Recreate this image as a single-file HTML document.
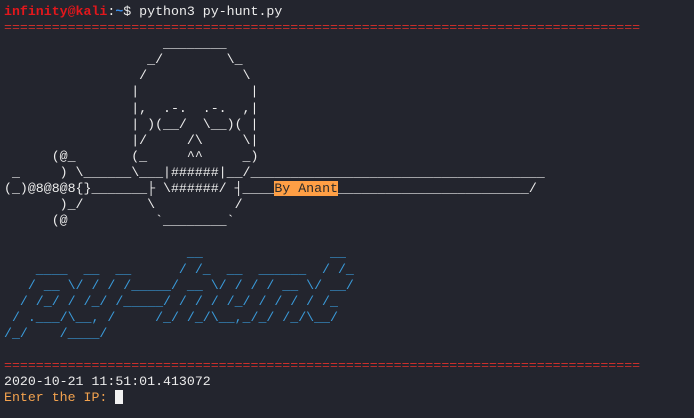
<!DOCTYPE html>
<html><head><meta charset="utf-8"><style>
html,body{margin:0;padding:0;background:#23252e;width:694px;height:418px;overflow:hidden}
pre{margin:0;padding:4px 0 0 4px;font-family:"Liberation Mono","DejaVu Sans Mono",monospace;font-size:13.25px;line-height:16.1px;color:#ececec;white-space:pre}
.r{color:#e3171c;font-weight:bold}
.b{color:#3b8eea;font-weight:bold}
.eq{color:#c9302c}
.bl{color:#3a9ad9}
.o{color:#f3a24e}
.ba{background:#ff9f45;color:#2b2b2b}
.cur{display:inline-block;width:8px;height:14px;background:#f2f2f2;vertical-align:-3px}
</style></head><body><pre><span class="r">infinity@kali</span>:<span class="b">~</span>$ python3 py-hunt.py
<span class="eq">================================================================================</span>
                    ________
                  _/        \_
                 /            \
                |              |
                |,  .-.  .-.  ,|
                | )(__/  \__)( |
                |/     /\     \|
      (@_       (_     ^^     _)
 _     ) \______\___|######|__/_____________________________________
(_)@8@8@8{}_______├ \######/ ┤____<span class="ba">By Anant</span>________________________/
       )_/        \          /
      (@           `________`

<span class="bl">                       __                __
    ____  __  __      / /_  __  ______  / /_
   / __ \/ / / /_____/ __ \/ / / / __ \/ __/
  / /_/ / /_/ /_____/ / / / /_/ / / / / /_
 / .___/\__, /     /_/ /_/\__,_/_/ /_/\__/
/_/    /____/</span>

<span class="eq">================================================================================</span>
2020-10-21 11:51:01.413072
<span class="o">Enter the IP: </span><span class="cur"></span></pre></body></html>
